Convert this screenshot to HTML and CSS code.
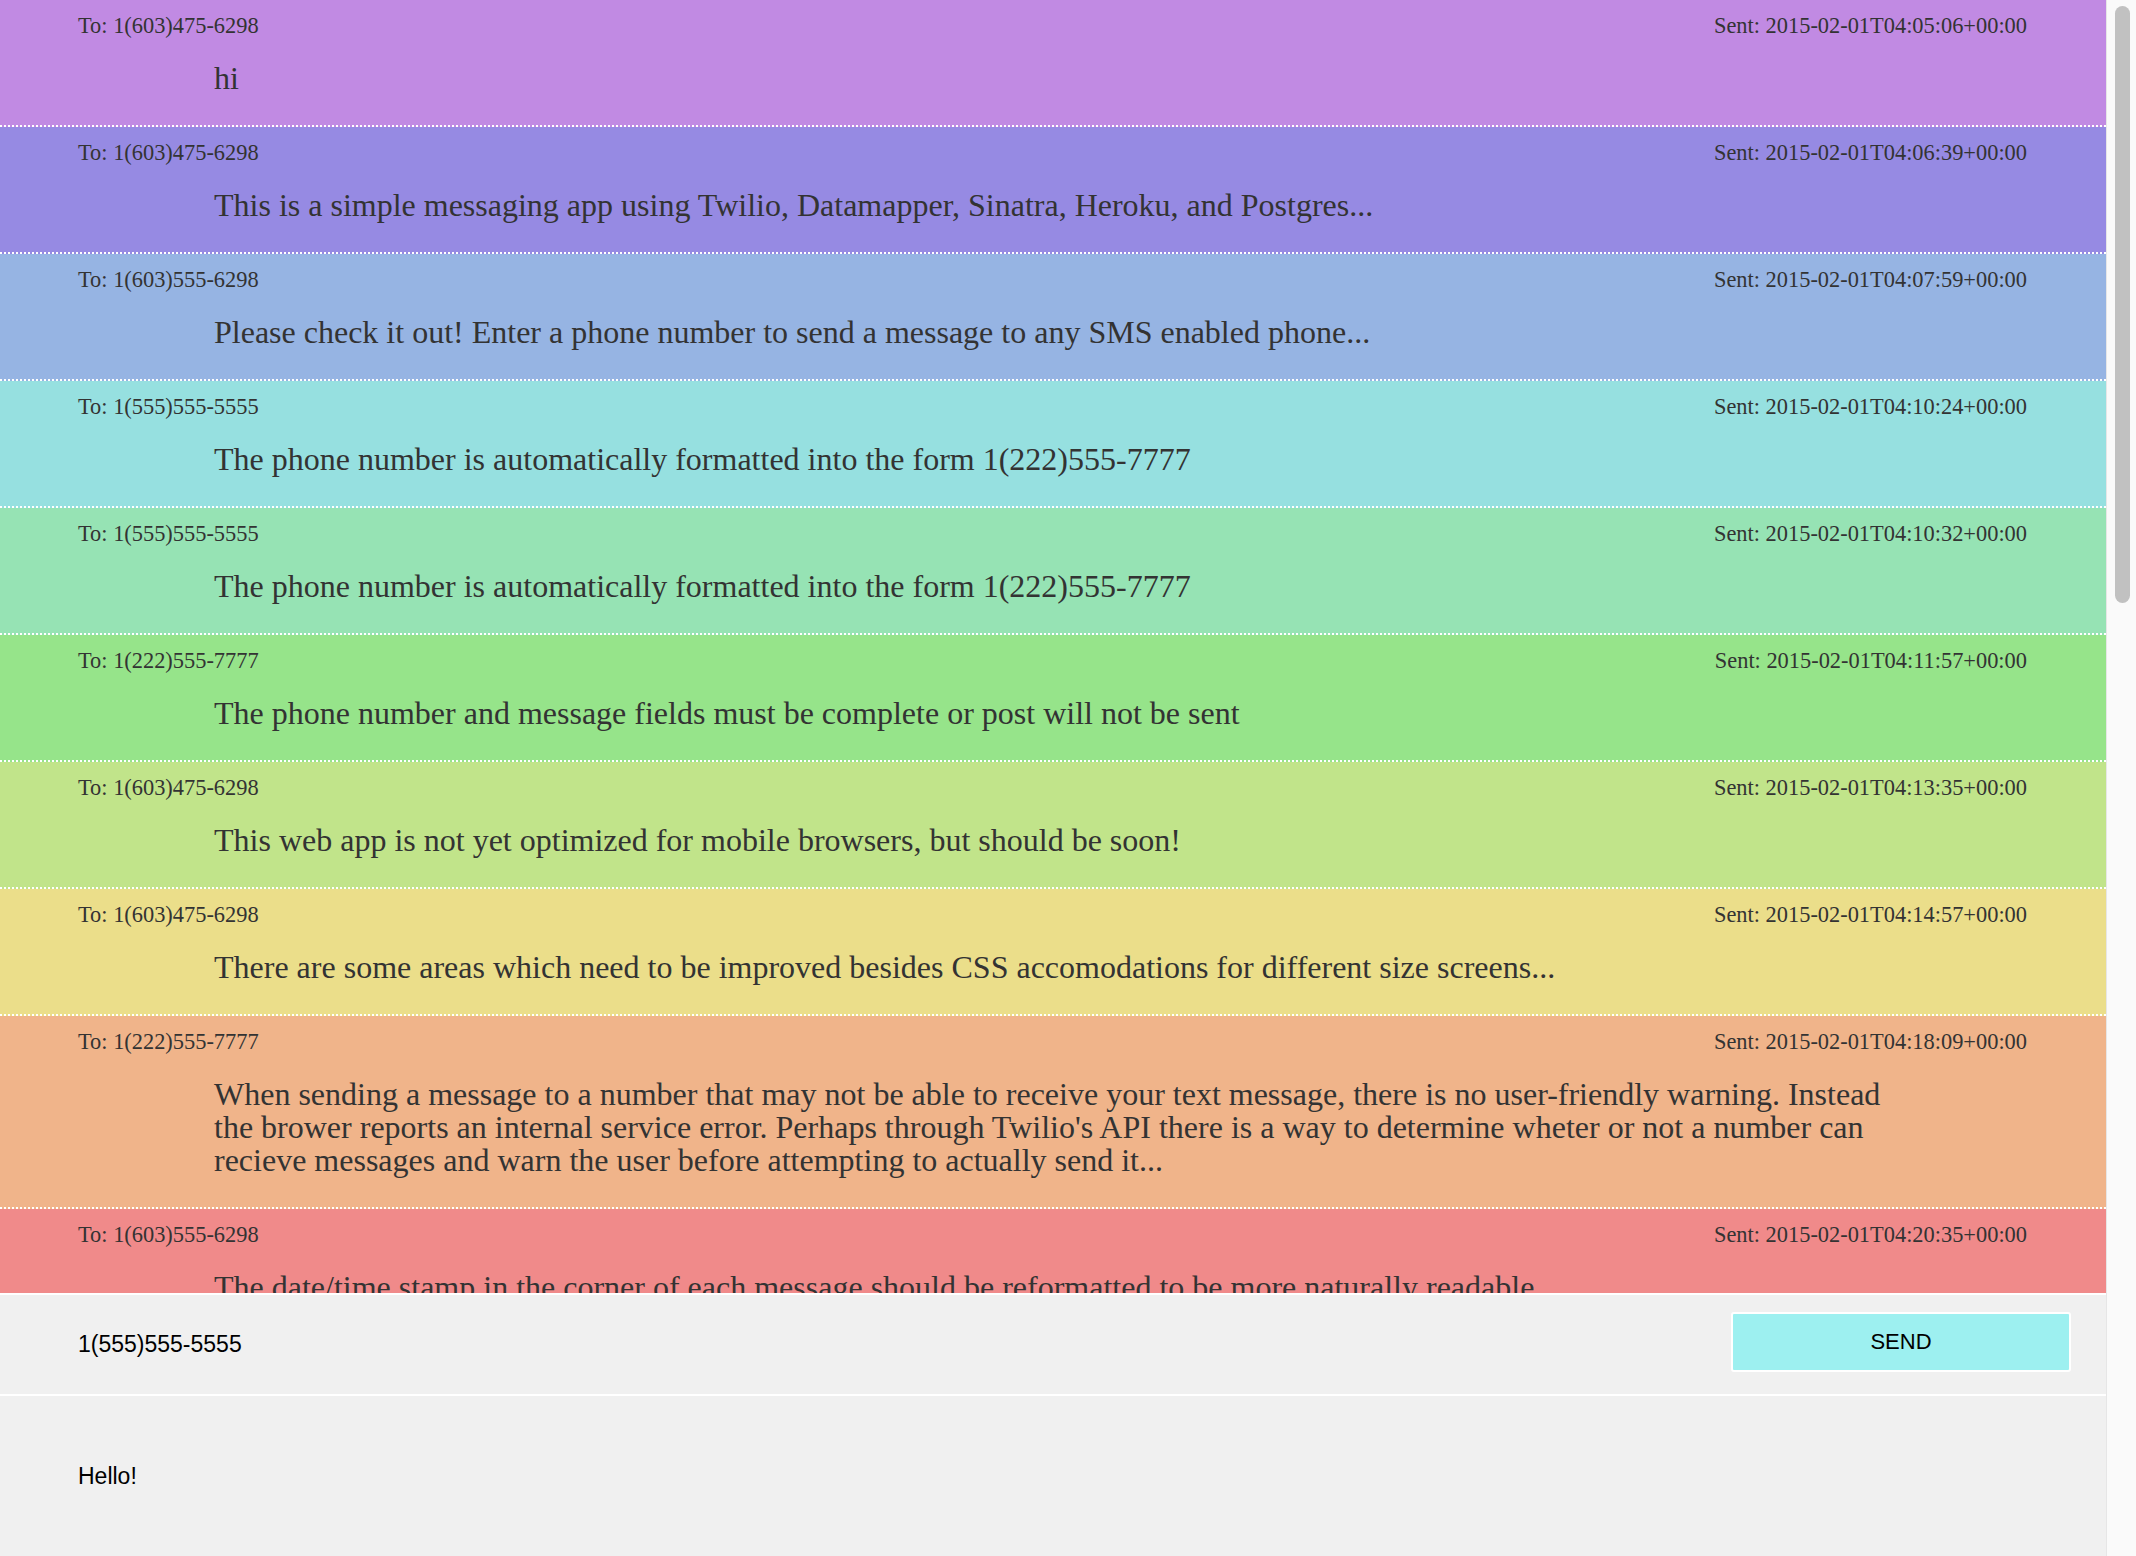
FILE: index.html
```html
<!DOCTYPE html>
<html lang="en">
<head>
<meta charset="utf-8">
<title>Messages</title>
<link rel="stylesheet" href="styles.css">
</head>
<body>
<div class="window">
  <main class="app">
    <ul class="messages">
      <li class="msg c1">
        <div class="meta"><span>To: 1(603)475-6298</span><span>Sent: 2015-02-01T04:05:06+00:00</span></div>
        <p class="text">hi</p>
      </li>
      <li class="msg c2">
        <div class="meta"><span>To: 1(603)475-6298</span><span>Sent: 2015-02-01T04:06:39+00:00</span></div>
        <p class="text">This is a simple messaging app using Twilio, Datamapper, Sinatra, Heroku, and Postgres...</p>
      </li>
      <li class="msg c3">
        <div class="meta"><span>To: 1(603)555-6298</span><span>Sent: 2015-02-01T04:07:59+00:00</span></div>
        <p class="text">Please check it out! Enter a phone number to send a message to any SMS enabled phone...</p>
      </li>
      <li class="msg c4">
        <div class="meta"><span>To: 1(555)555-5555</span><span>Sent: 2015-02-01T04:10:24+00:00</span></div>
        <p class="text">The phone number is automatically formatted into the form 1(222)555-7777</p>
      </li>
      <li class="msg c5">
        <div class="meta"><span>To: 1(555)555-5555</span><span>Sent: 2015-02-01T04:10:32+00:00</span></div>
        <p class="text">The phone number is automatically formatted into the form 1(222)555-7777</p>
      </li>
      <li class="msg c6">
        <div class="meta"><span>To: 1(222)555-7777</span><span>Sent: 2015-02-01T04:11:57+00:00</span></div>
        <p class="text">The phone number and message fields must be complete or post will not be sent</p>
      </li>
      <li class="msg c7">
        <div class="meta"><span>To: 1(603)475-6298</span><span>Sent: 2015-02-01T04:13:35+00:00</span></div>
        <p class="text">This web app is not yet optimized for mobile browsers, but should be soon!</p>
      </li>
      <li class="msg c8">
        <div class="meta"><span>To: 1(603)475-6298</span><span>Sent: 2015-02-01T04:14:57+00:00</span></div>
        <p class="text">There are some areas which need to be improved besides CSS accomodations for different size screens...</p>
      </li>
      <li class="msg c9">
        <div class="meta"><span>To: 1(222)555-7777</span><span>Sent: 2015-02-01T04:18:09+00:00</span></div>
        <p class="text">When sending a message to a number that may not be able to receive your text message, there is no user-friendly warning. Instead the brower reports an internal service error. Perhaps through Twilio's API there is a way to determine wheter or not a number can recieve messages and warn the user before attempting to actually send it...</p>
      </li>
      <li class="msg c10">
        <div class="meta"><span>To: 1(603)555-6298</span><span>Sent: 2015-02-01T04:20:35+00:00</span></div>
        <p class="text">The date/time stamp in the corner of each message should be reformatted to be more naturally readable.</p>
      </li>
    </ul>
    <form class="composer">
      <div class="composer-row">
        <input class="phone" type="text" value="1(555)555-5555">
        <button class="send" type="button">SEND</button>
      </div>
      <textarea class="body-input">Hello!</textarea>
    </form>
  </main>
  <div class="scrollbar" aria-hidden="true"><div class="thumb"></div></div>
</div>
</body>
</html>
```
FILE: styles.css
```css
html, body {
  margin: 0;
  height: 100%;
  overflow: hidden;
}
body {
  background: #f0f0f0;
  font-family: "Liberation Serif", "Times New Roman", serif;
  color: #333;
}
.window {
  display: flex;
  height: 100vh;
}
.app {
  flex: 1;
  min-width: 0;
  display: flex;
  flex-direction: column;
}
.messages {
  flex: 1;
  min-height: 0;
  overflow: hidden;
  list-style: none;
  margin: 0;
  padding: 0;
}
.msg {
  padding: 13px 79px 30px 78px;
  border-bottom: 2px dotted #fff;
}
.meta {
  display: flex;
  justify-content: space-between;
  font-size: 22.4px;
  line-height: 25px;
}
.text {
  margin: 24px 135px 0 136px;
  font-size: 32px;
  line-height: 33px;
}
.c1 { background: #c18ae3; }
.c2 { background: #968ae3; }
.c3 { background: #96b4e3; }
.c4 { background: #96e0e0; }
.c5 { background: #96e3b4; }
.c6 { background: #96e48a; }
.c7 { background: #c1e48a; }
.c8 { background: #ebde8a; }
.c9 { background: #f0b48a; }
.c10 { background: #f08a8a; }

.composer {
  flex: none;
  margin: 0;
  display: flex;
  flex-direction: column;
  background: #f0f0f0;
  border-top: 2px solid #fff;
}
.composer-row {
  height: 99px;
  display: flex;
  align-items: center;
  justify-content: space-between;
  padding: 0 35px 0 78px;
  border-bottom: 2px solid #fff;
}
.phone {
  border: none;
  background: transparent;
  padding: 0;
  margin: 0;
  font-family: "Liberation Sans", Arial, sans-serif;
  font-size: 23px;
  color: #000;
  width: 600px;
  outline: none;
}
.send {
  width: 340px;
  height: 60px;
  margin-bottom: 5px;
  background: #9df0f0;
  border: 2px solid #fff;
  border-radius: 3px;
  font-family: "Liberation Sans", Arial, sans-serif;
  font-size: 22px;
  color: #000;
  padding: 0;
}
.body-input {
  display: block;
  height: 160px;
  box-sizing: border-box;
  padding: 67px 78px 0;
  margin: 0;
  border: none;
  background: transparent;
  resize: none;
  overflow: hidden;
  font-family: "Liberation Sans", Arial, sans-serif;
  font-size: 23px;
  line-height: 26px;
  color: #000;
  outline: none;
}
.scrollbar {
  flex: none;
  width: 30px;
  box-sizing: border-box;
  padding: 6px 6px 0 8px;
  background: #fafafa;
  border-left: 1px solid #e6e6e6;
}
.thumb {
  height: 597px;
  border-radius: 8px;
  background: #c1c1c1;
}
```
